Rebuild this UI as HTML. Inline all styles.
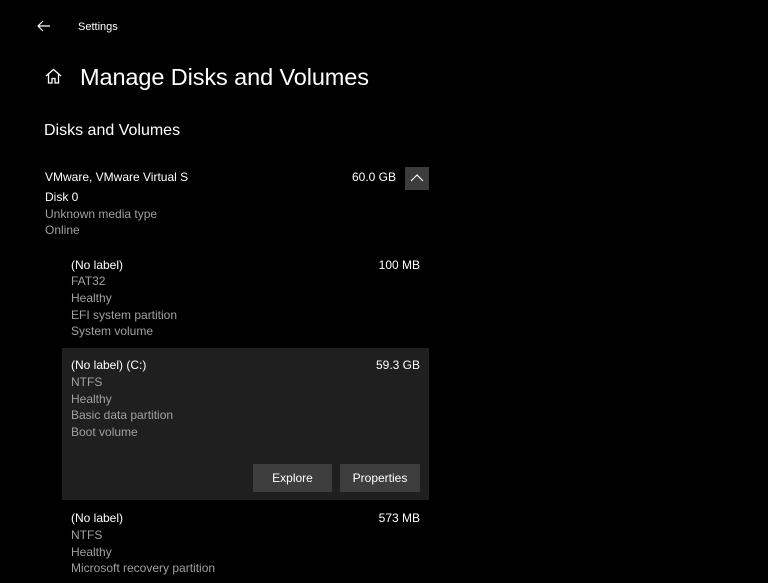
<!DOCTYPE html><html><head><style>
body{margin:0;width:768px;height:583px;background:#000;font-family:"Liberation Sans",sans-serif;color:#fff;overflow:hidden;position:relative}
.t{position:absolute;white-space:nowrap;font-size:12px;line-height:14px}
.g{color:#a0a0a0}
</style></head><body>
<svg style="position:absolute;left:37px;top:20px" width="14" height="12" viewBox="0 0 14 12"><path d="M6 1L1 6L6 11M1 6H13" stroke="#fff" stroke-width="1.2" fill="none"/></svg>
<div class="t" style="left:78px;top:20px;font-size:11px">Settings</div>
<svg style="position:absolute;left:45px;top:68px" width="17" height="16" viewBox="0 0 17 16"><path d="M1 8L8.5 1.5L16 8M3.5 6V15H7V10.5H10V15H13.5V6" stroke="#fff" stroke-width="1.3" fill="none"/></svg>
<div class="t" style="left:80px;top:63px;font-size:23.5px;line-height:28px;letter-spacing:-0.1px">Manage Disks and Volumes</div>
<div class="t" style="left:44px;top:121px;font-size:16px;line-height:20px">Disks and Volumes</div>
<div class="t" style="left:45px;top:170px">VMware, VMware Virtual S</div>
<div class="t" style="left:316px;top:170px;width:80px;text-align:right">60.0 GB</div>
<div style="position:absolute;left:405px;top:167px;width:24px;height:23px;background:#3c3c3c"></div>
<svg style="position:absolute;left:410px;top:173px" width="14" height="10" viewBox="0 0 14 10"><path d="M1 8L7 2L13 8" stroke="#fff" stroke-width="1.2" fill="none"/></svg>
<div class="t" style="left:45px;top:190px">Disk 0</div>
<div class="t g" style="left:45px;top:207px">Unknown media type</div>
<div class="t g" style="left:45px;top:223px">Online</div>

<div class="t" style="left:71px;top:258px">(No label)</div>
<div class="t" style="left:340px;top:258px;width:80px;text-align:right">100 MB</div>
<div class="t g" style="left:71px;top:274px">FAT32</div>
<div class="t g" style="left:71px;top:291px">Healthy</div>
<div class="t g" style="left:71px;top:308px">EFI system partition</div>
<div class="t g" style="left:71px;top:324px">System volume</div>

<div style="position:absolute;left:62px;top:348px;width:367px;height:152px;background:#1f1f1f"></div>
<div class="t" style="left:71px;top:358px">(No label) (C:)</div>
<div class="t" style="left:340px;top:358px;width:80px;text-align:right">59.3 GB</div>
<div class="t g" style="left:71px;top:375px">NTFS</div>
<div class="t g" style="left:71px;top:392px">Healthy</div>
<div class="t g" style="left:71px;top:408px">Basic data partition</div>
<div class="t g" style="left:71px;top:425px">Boot volume</div>
<div style="position:absolute;left:253px;top:464px;width:79px;height:28px;background:#3e3e3e;font-size:12px;line-height:29px;text-align:center">Explore</div>
<div style="position:absolute;left:340px;top:464px;width:80px;height:28px;background:#3e3e3e;font-size:12px;line-height:29px;text-align:center">Properties</div>

<div class="t" style="left:71px;top:511px">(No label)</div>
<div class="t" style="left:340px;top:511px;width:80px;text-align:right">573 MB</div>
<div class="t g" style="left:71px;top:528px">NTFS</div>
<div class="t g" style="left:71px;top:545px">Healthy</div>
<div class="t g" style="left:71px;top:561px">Microsoft recovery partition</div>
</body></html>
